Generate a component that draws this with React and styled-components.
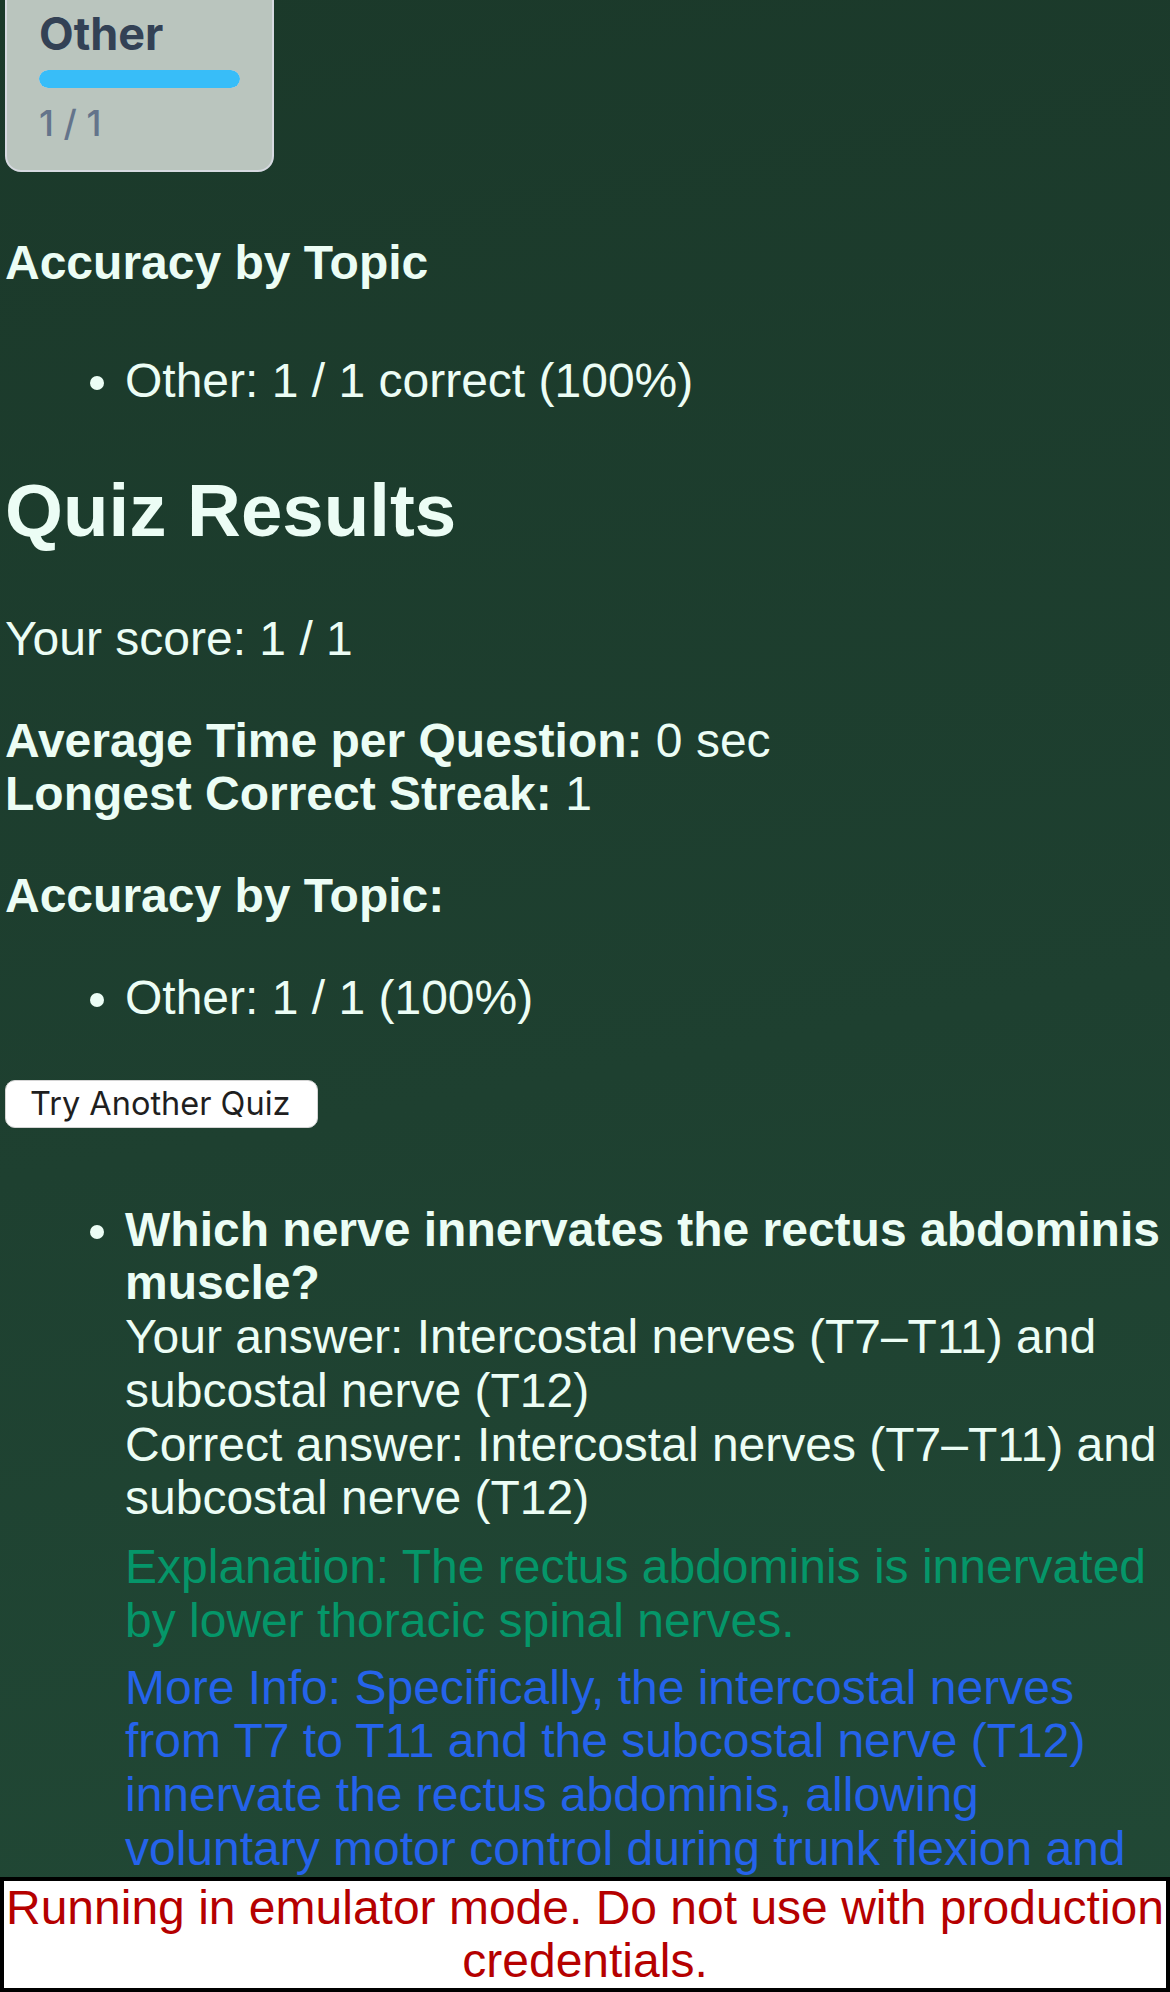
import React from "react";
import styled, { createGlobalStyle } from "styled-components";

const GlobalStyle = createGlobalStyle`
  html, body {
    margin: 0;
    padding: 0;
  }
  body {
    min-height: 1992px;
    background: linear-gradient(170deg, #1b392a 0%, #1e4030 50%, #224b37 100%);
    color: #ecfdf5;
    font-family: "Liberation Sans", Arial, sans-serif;
    font-size: 48px;
    line-height: 1.12;
  }
`;

const Page = styled.div`
  padding: 0 0 180px 5px;
`;

const TopicGrid = styled.div`
  display: grid;
  grid-template-columns: repeat(auto-fill, 269px);
  gap: 24px;
  margin-top: -27px;
`;

const TopicCard = styled.div`
  box-sizing: border-box;
  width: 269px;
  padding: 32px 32px 25px;
  border: 2px solid #d6d9e0;
  border-radius: 16px;
  background: #bac5be;
  font-family: Inter, "Liberation Sans", sans-serif;
`;

const TopicName = styled.div`
  font-size: 45px;
  font-weight: 700;
  line-height: 54px;
  color: #334155;
`;

const Bar = styled.div`
  height: 18px;
  margin-top: 9px;
  border-radius: 9px;
  background: #cbd5e1;
  overflow: hidden;
`;

const BarFill = styled.div`
  height: 100%;
  border-radius: 9px;
  background: #38bdf8;
`;

const TopicCount = styled.div`
  margin-top: 14px;
  font-size: 36px;
  font-weight: 500;
  line-height: 43px;
  color: #64748b;
`;

const SubTitle = styled.h4`
  margin: 64px 0;
  font-size: 48px;
  font-weight: 700;
`;

const Title = styled.h2`
  margin: 61px 0 60px;
  font-size: 74.5px;
  font-weight: 700;
`;

const Para = styled.p`
  margin: 48px 0;
`;

const List = styled.ul`
  margin: ${(p) => p.$top || 48}px 0 48px;
  padding-left: 120px;
`;

const Button = styled.button`
  display: block;
  box-sizing: border-box;
  width: 313px;
  height: 48px;
  margin-top: 55px;
  padding: 0 24px;
  border: 1px solid #d4d4d4;
  border-radius: 10px;
  background: #fff;
  color: #1f1f1f;
  font-family: Inter, "Liberation Sans", sans-serif;
  font-size: 32.5px;
  text-align: left;
  white-space: nowrap;
`;

const Note = styled.p`
  margin: ${(p) => p.$gap}px 0 0;
  color: ${(p) => p.$color};
`;

const EmulatorWarning = styled.p`
  position: fixed;
  left: 0;
  bottom: 0;
  box-sizing: border-box;
  width: 100%;
  margin: 0;
  border: 4px solid #000;
  background: #fff;
  color: #b50000;
  text-align: center;
  z-index: 10;
`;

const topics = [{ name: "Other", correct: 1, total: 1 }];

const answers = [
  {
    question: "Which nerve innervates the rectus abdominis muscle?",
    yours: "Intercostal nerves (T7–T11) and subcostal nerve (T12)",
    correct: "Intercostal nerves (T7–T11) and subcostal nerve (T12)",
    explanation:
      "The rectus abdominis is innervated by lower thoracic spinal nerves.",
    more:
      "Specifically, the intercostal nerves from T7 to T11 and the subcostal nerve (T12) innervate the rectus abdominis, allowing voluntary motor control during trunk flexion and stabilization of the abdominal wall.",
  },
];

export default function App() {
  return (
    <>
      <GlobalStyle />
      <Page>
        <TopicGrid>
          {topics.map((t) => (
            <TopicCard key={t.name}>
              <TopicName>{t.name}</TopicName>
              <Bar>
                <BarFill style={{ width: `${(t.correct / t.total) * 100}%` }} />
              </Bar>
              <TopicCount>
                {t.correct} / {t.total}
              </TopicCount>
            </TopicCard>
          ))}
        </TopicGrid>

        <SubTitle>Accuracy by Topic</SubTitle>
        <List>
          {topics.map((t) => (
            <li key={t.name}>
              {t.name}: {t.correct} / {t.total} correct (
              {Math.round((t.correct / t.total) * 100)}%)
            </li>
          ))}
        </List>

        <Title>Quiz Results</Title>
        <Para>Your score: 1 / 1</Para>
        <Para>
          <strong>Average Time per Question:</strong> 0 sec
          <br />
          <strong>Longest Correct Streak:</strong> 1
        </Para>
        <Para>
          <strong>Accuracy by Topic:</strong>
        </Para>
        <List>
          {topics.map((t) => (
            <li key={t.name}>
              {t.name}: {t.correct} / {t.total} (
              {Math.round((t.correct / t.total) * 100)}%)
            </li>
          ))}
        </List>

        <Button>Try Another Quiz</Button>

        <List $top={75}>
          {answers.map((a) => (
            <li key={a.question}>
              <strong>{a.question}</strong>
              <br />
              Your answer: {a.yours}
              <br />
              Correct answer: {a.correct}
              <Note $gap={15} $color="#059669">
                Explanation: {a.explanation}
              </Note>
              <Note $gap={13} $color="#2563eb">
                More Info: {a.more}
              </Note>
            </li>
          ))}
        </List>
      </Page>
      <EmulatorWarning>
        Running in emulator mode. Do not use with production credentials.
      </EmulatorWarning>
    </>
  );
}
